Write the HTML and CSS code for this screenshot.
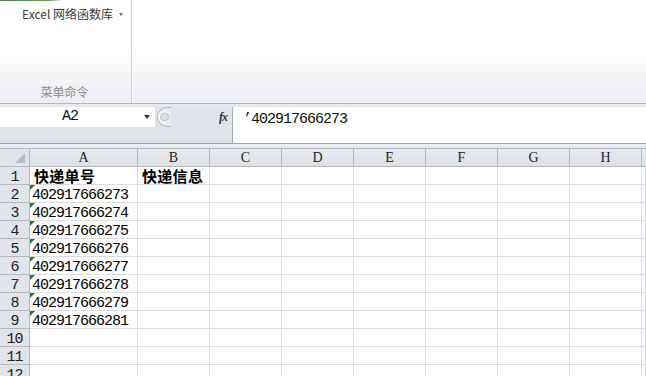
FILE: index.html
```html
<!DOCTYPE html>
<html lang="zh-CN">
<head>
<meta charset="utf-8">
<link rel="stylesheet" href="styles.css">
</head>
<body>
<div class="app">
  <div class="ribbon">
    <div class="tabmark"></div>
    <div class="group">
      <div class="cmd">Excel 网络函数库<span class="caret"></span></div>
      <div class="glabel">菜单命令</div>
    </div>
    <div class="ribbon-rest"></div>
  </div>
  <div class="fbar">
    <div class="fleft">
      <div class="namerow">
        <div class="namebox"><span class="nametext">A2</span><span class="ddarrow"></span></div>
        <div class="knob"><span class="knobdot"></span></div>
        <div class="fx">fx</div>
      </div>
    </div>
    <div class="finput">’402917666273</div>
  </div>
  <div class="sep"></div>
  <div class="sheet">
    <div class="corner"><span class="tri"></span></div>
    <div class="ch">A</div><div class="ch">B</div><div class="ch">C</div><div class="ch">D</div><div class="ch">E</div><div class="ch">F</div><div class="ch">G</div><div class="ch">H</div><div class="ch last"></div>

    <div class="rh">1</div><div class="c hd">快递单号</div><div class="c hd">快递信息</div><div class="c"></div><div class="c"></div><div class="c"></div><div class="c"></div><div class="c"></div><div class="c"></div><div class="c"></div>
    <div class="rh">2</div><div class="c num"><span class="flag"></span>402917666273</div><div class="c"></div><div class="c"></div><div class="c"></div><div class="c"></div><div class="c"></div><div class="c"></div><div class="c"></div><div class="c"></div>
    <div class="rh">3</div><div class="c num"><span class="flag"></span>402917666274</div><div class="c"></div><div class="c"></div><div class="c"></div><div class="c"></div><div class="c"></div><div class="c"></div><div class="c"></div><div class="c"></div>
    <div class="rh">4</div><div class="c num"><span class="flag"></span>402917666275</div><div class="c"></div><div class="c"></div><div class="c"></div><div class="c"></div><div class="c"></div><div class="c"></div><div class="c"></div><div class="c"></div>
    <div class="rh">5</div><div class="c num"><span class="flag"></span>402917666276</div><div class="c"></div><div class="c"></div><div class="c"></div><div class="c"></div><div class="c"></div><div class="c"></div><div class="c"></div><div class="c"></div>
    <div class="rh">6</div><div class="c num"><span class="flag"></span>402917666277</div><div class="c"></div><div class="c"></div><div class="c"></div><div class="c"></div><div class="c"></div><div class="c"></div><div class="c"></div><div class="c"></div>
    <div class="rh">7</div><div class="c num"><span class="flag"></span>402917666278</div><div class="c"></div><div class="c"></div><div class="c"></div><div class="c"></div><div class="c"></div><div class="c"></div><div class="c"></div><div class="c"></div>
    <div class="rh">8</div><div class="c num"><span class="flag"></span>402917666279</div><div class="c"></div><div class="c"></div><div class="c"></div><div class="c"></div><div class="c"></div><div class="c"></div><div class="c"></div><div class="c"></div>
    <div class="rh">9</div><div class="c num"><span class="flag"></span>402917666281</div><div class="c"></div><div class="c"></div><div class="c"></div><div class="c"></div><div class="c"></div><div class="c"></div><div class="c"></div><div class="c"></div>
    <div class="rh">10</div><div class="c"></div><div class="c"></div><div class="c"></div><div class="c"></div><div class="c"></div><div class="c"></div><div class="c"></div><div class="c"></div><div class="c"></div>
    <div class="rh">11</div><div class="c"></div><div class="c"></div><div class="c"></div><div class="c"></div><div class="c"></div><div class="c"></div><div class="c"></div><div class="c"></div><div class="c"></div>
    <div class="rh">12</div><div class="c"></div><div class="c"></div><div class="c"></div><div class="c"></div><div class="c"></div><div class="c"></div><div class="c"></div><div class="c"></div><div class="c"></div>
  </div>
</div>
</body>
</html>
```

FILE: styles.css
```css
html, body {
  margin: 0;
  padding: 0;
  width: 646px;
  height: 376px;
  overflow: hidden;
  background: #ffffff;
}
.app {
  width: 646px;
  height: 376px;
  overflow: hidden;
  font-family: "Noto Sans CJK SC", "Noto Sans", sans-serif;
}

/* Ribbon */
.ribbon {
  position: relative;
  height: 103px;
  display: flex;
  background: linear-gradient(#ffffff 0%, #ffffff 45%, #f0f1f4 85%, #eceef1 100%);
  border-bottom: 1px solid #b4b8be;
}
.tabmark {
  position: absolute;
  left: 0;
  top: 0;
  width: 62px;
  height: 1px;
  background: linear-gradient(90deg, #4e7d44, #6f9a62 80%, rgba(111,154,98,0));
}
.group {
  width: 132px;
  border-right: 1px solid #c9ccd1;
  display: flex;
  flex-direction: column;
  justify-content: space-between;
  align-items: center;
  box-sizing: border-box;
  padding: 5px 0 3px 0;
}
.cmd {
  font-size: 12px;
  line-height: 18px;
  color: #3c3c3c;
  display: flex;
  align-items: center;
  padding-left: 14px;
}
.caret {
  display: inline-block;
  width: 0;
  height: 0;
  border-left: 2.5px solid transparent;
  border-right: 2.5px solid transparent;
  border-top: 3px solid #6a6a6a;
  margin-left: 6px;
  margin-top: 1px;
}
.glabel {
  font-size: 12px;
  line-height: 16px;
  color: #8c8c8c;
  padding-right: 2px;
}
.ribbon-rest {
  flex: 1;
  border-left: 1px solid #ffffff;
}

/* Formula bar */
.fbar {
  height: 36px;
  padding-top: 3px;
  display: flex;
  background: #e6e9ed;
  border-bottom: 1px solid #9da2a9;
}
.fleft {
  width: 232px;
  background: #e0e3e8;
}
.namerow {
  display: flex;
  align-items: center;
  height: 20px;
}
.namebox {
  width: 155px;
  height: 20px;
  background: #ffffff;
  display: flex;
  align-items: center;
  position: relative;
}
.nametext {
  flex: 1;
  text-align: center;
  font-family: "Liberation Mono", monospace;
  font-size: 15px;
  letter-spacing: -1px;
  color: #111;
  padding-right: 4px;
  line-height: 22px;
}
.ddarrow {
  width: 0;
  height: 0;
  border-left: 3.5px solid transparent;
  border-right: 3.5px solid transparent;
  border-top: 4px solid #333;
  margin-right: 5px;
}
.knob {
  width: 14px;
  height: 20px;
  margin-left: 2px;
  border-radius: 10px 0 0 10px;
  background: linear-gradient(90deg, #f7f8f9, #e6e8eb);
  border: 1px solid #b3b7bd;
  border-right: none;
  box-sizing: border-box;
  display: flex;
  align-items: center;
  justify-content: center;
}
.knobdot {
  width: 7px;
  height: 6px;
  border-radius: 4px;
  background: #dfe1e4;
  border: 1px solid #bfc3c8;
}
.fx {
  margin-left: auto;
  margin-right: 5px;
  font-family: "Liberation Serif", serif;
  font-style: italic;
  font-weight: bold;
  font-size: 12px;
  color: #333;
  letter-spacing: -1px;
}
.finput {
  flex: 1;
  background: #ffffff;
  border-left: 1px solid #a3a8ae;
  font-family: "Liberation Mono", monospace;
  font-size: 15px;
  letter-spacing: -1px;
  color: #111;
  padding: 4px 0 0 10px;
  line-height: 18px;
}
.sep {
  height: 4px;
  background: #e9ebee;
  border-bottom: 1px solid #b3b7bd;
}

/* Sheet */
.sheet {
  display: grid;
  grid-template-columns: 30px 108px repeat(7, 72px) 4px;
  grid-auto-rows: 18px;
}
.corner, .ch, .rh {
  background: #e1e4e9;
  box-sizing: border-box;
  border-right: 1px solid #b3b8be;
  border-bottom: 1px solid #b3b8be;
  color: #222;
  font-family: "Liberation Serif", serif;
  font-size: 14px;
  line-height: 18px;
}
.corner {
  position: relative;
}
.tri {
  position: absolute;
  right: 4px;
  bottom: 3px;
  width: 0;
  height: 0;
  border-left: 10px solid transparent;
  border-bottom: 10px solid #b9bdc3;
}
.ch {
  text-align: center;
  background: linear-gradient(#e7eaee, #dde1e6);
}
.ch.last {
  border-right: none;
}
.rh {
  text-align: center;
  font-family: "Liberation Mono", monospace;
  font-size: 15px;
  letter-spacing: -1px;
  line-height: 21px;
}
.c {
  box-sizing: border-box;
  border-right: 1px solid #dadcdf;
  border-bottom: 1px solid #dadcdf;
  position: relative;
  white-space: nowrap;
}
.c.hd {
  font-family: "Noto Sans CJK SC", sans-serif;
  font-weight: 700;
  font-size: 15px;
  line-height: 18px;
  color: #000;
  padding-left: 4px;
  letter-spacing: 0.3px;
}
.c.num {
  font-family: "Liberation Mono", monospace;
  font-size: 15px;
  letter-spacing: -1px;
  line-height: 21px;
  color: #000;
  padding-left: 2px;
}
.flag {
  position: absolute;
  left: 0;
  top: 0;
  width: 0;
  height: 0;
  border-top: 5px solid #1d7b24;
  border-right: 5px solid transparent;
}
```
